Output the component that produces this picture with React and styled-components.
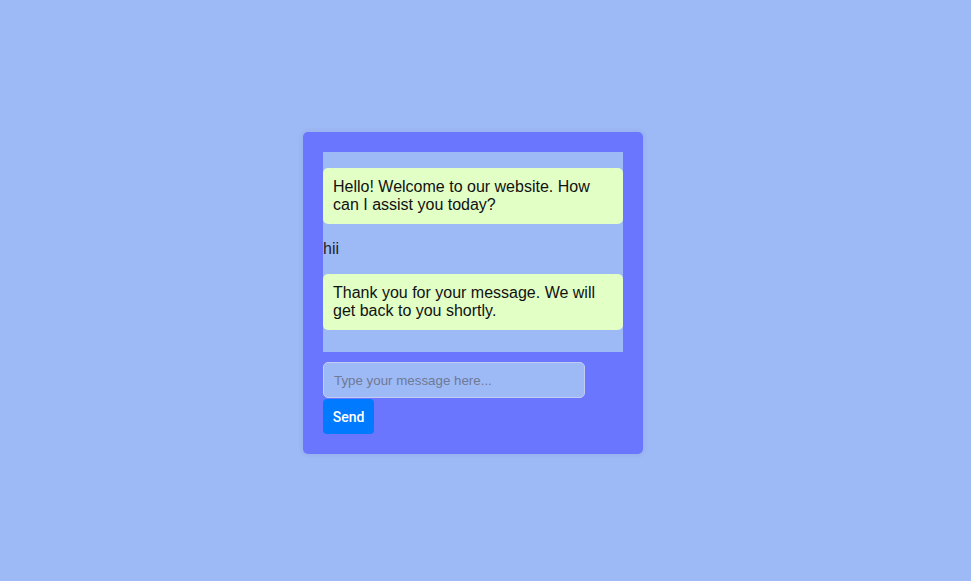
import React from "react";
import styled, { createGlobalStyle } from "styled-components";

const GlobalStyle = createGlobalStyle`
  body {
    margin: 0;
    background-color: #9db9f6;
    font-family: "Liberation Sans", Arial, sans-serif;
  }
`;

const messages = [
  { from: "bot", text: "Hello! Welcome to our website. How can I assist you today?" },
  { from: "user", text: "hii" },
  { from: "bot", text: "Thank you for your message. We will get back to you shortly." },
];

function App() {
  return (
    <>
      <GlobalStyle />
      <Page>
        <ChatBox>
          <ChatArea>
            {messages.map((m, i) => (
              <Message key={i} $bot={m.from === "bot"}>
                {m.text}
              </Message>
            ))}
          </ChatArea>
          <MessageInput type="text" placeholder="Type your message here..." />
          <SendButton>Send</SendButton>
        </ChatBox>
      </Page>
    </>
  );
}

export default App;

const Page = styled.div`
  min-height: 100vh;
  box-sizing: border-box;
  padding: 5px 25px 0 0;
  display: flex;
  align-items: center;
  justify-content: center;
`;

const ChatBox = styled.div`
  width: 300px;
  padding: 20px;
  background-color: #6b76ff;
  border-radius: 5px;
  box-shadow: 0 0 6px rgba(0, 0, 0, 0.08);
  display: flex;
  flex-direction: column;
  align-items: flex-start;
`;

const ChatArea = styled.div`
  width: 300px;
  height: 200px;
  overflow: hidden;
  background-color: #9db9f6;
  display: flow-root;
`;

const Message = styled.p`
  margin: 16px 0;
  font-size: 16px;
  line-height: 18px;
  color: ${(p) => (p.$bot ? "#111" : "#222")};
  background-color: ${(p) => (p.$bot ? "#e2ffc6" : "transparent")};
  padding: ${(p) => (p.$bot ? "10px" : "0")};
  border-radius: 5px;
`;

const MessageInput = styled.input`
  margin-top: 10px;
  width: 262px;
  height: 36px;
  box-sizing: border-box;
  padding: 8px 10px;
  border: 1px solid #c4ccf4;
  border-radius: 5px;
  background-color: #9db9f6;
  font-family: "Liberation Sans", Arial, sans-serif;
  font-size: 13.33px;
  outline: none;

  &::placeholder {
    color: #6f7a94;
  }
`;

const SendButton = styled.button`
  margin-top: 1px;
  width: 51px;
  height: 35px;
  padding: 0;
  border: none;
  border-radius: 4px;
  background-color: #007bff;
  color: white;
  font-family: Roboto, "Liberation Sans", Arial, sans-serif;
  font-weight: 500;
  font-size: 14px;
  cursor: pointer;
`;
